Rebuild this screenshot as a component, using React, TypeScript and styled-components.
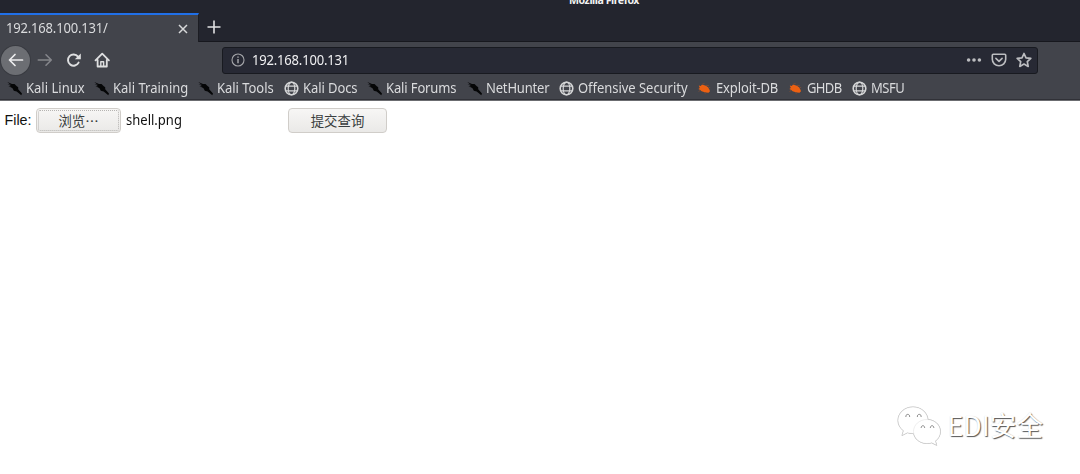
import React from "react";
import styled, { createGlobalStyle } from "styled-components";

const Global = createGlobalStyle`
  * { box-sizing: border-box; }
  body { margin: 0; background: #fff; overflow: hidden; }
`;

const Window = styled.div`
  position: relative;
  width: 1080px;
  height: 474px;
  background: #fff;
  font-family: "Noto Sans", "Noto Sans CJK SC", sans-serif;
  font-size: 14px;
  display: flex;
  flex-direction: column;
`;

const TitleBar = styled.header`
  height: 13px;
  background: #23252e;
  overflow: hidden;
  display: flex;
  padding-left: 569px;
`;

const Title = styled.span<{ $spacing: number }>`
  color: #f2f2f2;
  font-weight: 700;
  font-size: 10.6px;
  line-height: 14px;
  height: 14px;
  margin-top: -7px;
  letter-spacing: ${(p) => p.$spacing}px;
  white-space: nowrap;
`;

const TabStrip = styled.div`
  height: 29px;
  background: #23252e;
  display: flex;
  box-shadow: inset 0 -1px 0 #17181e;
`;

const Tab = styled.div`
  width: 199px;
  height: 29px;
  background: #42444b;
  border-top: 2px solid #2070e8;
  border-right: 1px solid #1c1d23;
  display: flex;
  align-items: center;
  justify-content: space-between;
  padding: 0 10px 2px 5.5px;
  svg { margin-top: 2px; }
`;

const NewTab = styled.div`
  display: flex;
  padding: 7px 0 0 8px;
`;

const Label = styled.span<{ $spacing?: number; $color?: string }>`
  color: ${(p) => p.$color ?? "#dadbdd"};
  letter-spacing: ${(p) => p.$spacing ?? 0}px;
  line-height: 18px;
  white-space: nowrap;
  display: block;
  transform: scaleX(0.93);
  transform-origin: left;
`;

const NavBar = styled.nav`
  height: 35px;
  background: #42444b;
  display: flex;
  align-items: center;
  padding: 1px 0 0 1px;
`;

const NavButtons = styled.div`
  width: 221px;
  display: flex;
  align-items: center;
`;

const BackButton = styled.div`
  width: 29px;
  height: 29px;
  border-radius: 50%;
  background: #6c6e73;
  box-shadow: 0 0 0 1px #393b41;
  display: flex;
  align-items: center;
  justify-content: center;
  margin-right: 6px;
`;

const NavIcon = styled.div`
  width: 29px;
  display: flex;
  svg { display: block; }
`;

const UrlBar = styled.div`
  width: 816px;
  height: 27px;
  background: #272934;
  border: 1px solid #181a20;
  border-radius: 3px;
  display: flex;
  align-items: center;
  padding: 0 5px 0 8px;
`;

const UrlText = styled.div`
  flex: 1;
  padding-left: 7px;
  display: flex;
`;

const UrlActions = styled.div`
  display: flex;
  align-items: center;
  gap: 9px;
`;

const Bookmarks = styled.div`
  height: 24px;
  background: #42444b;
  border-bottom: 1px solid #6b6c70;
  box-shadow: inset 0 -1px 0 #303137;
  display: flex;
  align-items: center;
  padding: 0 0 1px 6.5px;
`;

const Bookmark = styled.div<{ $width: number }>`
  width: ${(p) => p.$width}px;
  display: flex;
  align-items: center;
  flex: none;
`;

const BookmarkIcon = styled.span`
  width: 19px;
  flex: none;
  display: flex;
`;

const Form = styled.main`
  display: flex;
  align-items: center;
  height: 39px;
  padding-left: 4.500px;
`;

const FileLabel = styled.span`
  width: 31.500px;
  font-family: "Liberation Sans", Arial, sans-serif;
  font-size: 14.300px;
  line-height: 18px;
  padding-bottom: 1px;
  color: #111;
  white-space: nowrap;
`;

const Button = styled.button<{ $width: number; $focused?: boolean }>`
  width: ${(p) => p.$width}px;
  height: 25px;
  padding: 1px;
  border: 1px solid #d0cdc9;
  border-radius: 4px;
  background: linear-gradient(#f7f6f5, #eae9e7);
  font-family: "Noto Sans CJK SC", sans-serif;
  font-size: 13.400px;
  line-height: 18px;
  color: #3a3e40;
  display: flex;
  align-items: stretch;
  white-space: nowrap;
  & > span {
    flex: 1;
    display: flex;
    align-items: center;
    justify-content: center;
    padding-bottom: 1px;
    border: 1px dotted ${(p) => (p.$focused ? "#b5b3b1" : "transparent")};
    border-radius: 2px;
  }
`;

const FileName = styled.div`
  width: 167px;
  padding: 0 0 1px 5px;
  display: flex;
`;

const Watermark = styled.div`
  position: absolute;
  left: 896px;
  top: 402px;
  display: flex;
  align-items: center;
  svg { overflow: visible; filter: drop-shadow(0.700px 0.900px 0.500px #777); }
`;

const WatermarkText = styled.span`
  font-family: "Noto Sans CJK SC", sans-serif;
  font-size: 26.800px;
  line-height: 46px;
  color: #fff;
  padding-left: 4.500px;
  white-space: nowrap;
  text-shadow: 1px 1px 1px #555, 0 0 1px #ddd;
`;

const Dragon = () => (
  <svg width="15" height="15" viewBox="0 0 15 15">
    <path d="M.3 1 5 3.100 7.500 3 9.500 5 11.200 6.300 11.200 8.300 15 12.400 14.300 14.200 9.700 10.400 6.800 9.700 5.500 7.300 1.500 5 4.200 5.200.6 2.900 3.900 3.900Z" fill="#050607" />
  </svg>
);

const Globe = () => (
  <svg width="15" height="15" viewBox="0 0 15 15" fill="none" stroke="#d5d6d7">
    <circle cx="7.500" cy="7.500" r="6.300" strokeWidth="1.600" />
    <ellipse cx="7.500" cy="7.500" rx="3.300" ry="6.300" strokeWidth="1.200" />
    <path d="M1.700 5.200h11.600M1.700 9.800h11.600" strokeWidth="1.200" />
  </svg>
);

const Bug = () => (
  <svg width="15" height="15" viewBox="0 0 15 15">
    <path d="M1.800 4.500 3.900 5 4.700 3.800 6.500 4 8.800 4.700 11 6.300 12.400 8.500 13 10.200 11.500 11.700 9.200 11.500 7 11.100 4.600 10.300 3.200 8.900 1.400 7.900 2.800 6.900Z" fill="#ec6012" />
    <path d="M5 3.400 7.500 2.400M9 4.300l3 .5M3 9.500 1.500 10.500M7 11.300l1.600 1.400M11.400 6.300l1.800.4" stroke="#93502f" strokeWidth=".6" fill="none" />
  </svg>
);

const icons = { dragon: Dragon, globe: Globe, bug: Bug };

type Item = { name: string; icon: keyof typeof icons; width: number; spacing: number };

const bookmarks: Item[] = [
  { name: "Kali Linux", icon: "dragon", width: 87.5, spacing: 0 },
  { name: "Kali Training", icon: "dragon", width: 104, spacing: 0 },
  { name: "Kali Tools", icon: "dragon", width: 85.5, spacing: -0.05 },
  { name: "Kali Docs", icon: "globe", width: 83.5, spacing: -0.1 },
  { name: "Kali Forums", icon: "dragon", width: 99.5, spacing: -0.15 },
  { name: "NetHunter", icon: "dragon", width: 92.5, spacing: -0.2 },
  { name: "Offensive Security", icon: "globe", width: 138, spacing: -0.05 },
  { name: "Exploit-DB", icon: "bug", width: 91, spacing: -0.15 },
  { name: "GHDB", icon: "bug", width: 64, spacing: -0.7 },
  { name: "MSFU", icon: "globe", width: 56, spacing: -0.5 },
];

export default function App() {
  return (
    <Window>
      <Global />
      <TitleBar>
        <Title $spacing={-0.45}>Mozilla Firefox</Title>
      </TitleBar>
      <TabStrip>
        <Tab>
          <Label $spacing={-0.2}>192.168.100.131/</Label>
          <svg width="10" height="10" viewBox="0 0 10 10" stroke="#d8d9da" strokeWidth="1.5">
            <path d="M1 1l8 8M9 1 1 9" />
          </svg>
        </Tab>
        <NewTab>
          <svg width="14" height="14" viewBox="0 0 14 14" stroke="#e2e2e3" strokeWidth="1.6">
            <path d="M7 .5v13M.5 7h13" />
          </svg>
        </NewTab>
      </TabStrip>
      <NavBar>
        <NavButtons>
          <BackButton>
            <svg width="16" height="16" viewBox="0 0 16 16" fill="none" stroke="#ececed" strokeWidth="1.7" strokeLinecap="round" strokeLinejoin="round">
              <path d="M14.500 8H1.600M7 2.500 1.500 8 7 13.500" />
            </svg>
          </BackButton>
          <NavIcon>
            <svg width="17" height="16" viewBox="0 0 17 16" fill="none" stroke="#85868b" strokeWidth="1.6" strokeLinecap="round" strokeLinejoin="round">
              <path d="M2.300 8h13M10 2.800 15.300 8 10 13.200" />
            </svg>
          </NavIcon>
          <NavIcon>
            <svg width="17" height="16" viewBox="0 0 17 16" fill="none">
              <path d="M13 4.600A5.600 5.600 0 1 0 13.600 10.600" stroke="#dedfe0" strokeWidth="1.9" strokeLinecap="round" />
              <path d="M15.800 1.400v5.800H9.800Z" fill="#dedfe0" />
            </svg>
          </NavIcon>
          <NavIcon>
            <svg width="17" height="16" viewBox="0 0 17 16" fill="none" stroke="#dedfe0" strokeWidth="1.8" strokeLinecap="round" strokeLinejoin="round">
              <path d="M1.500 8.300 8.200 1.600l6.700 6.700M3.600 8v6.500h9.200V8" />
              <path d="M6.800 14v-4.200h2.800V14" strokeWidth="1.4" />
            </svg>
          </NavIcon>
        </NavButtons>
        <UrlBar>
          <svg width="14" height="14" viewBox="0 0 14 14" fill="none" stroke="#a4a5a9">
            <circle cx="7" cy="7" r="6" strokeWidth="1.1" />
            <path d="M7 6v4.300M7 3.400v1.400" strokeWidth="1.5" />
          </svg>
          <UrlText>
            <Label $spacing={-0.2} $color="#f0f0f2">192.168.100.131</Label>
          </UrlText>
          <UrlActions>
            <svg width="16" height="16" viewBox="0 0 16 16" fill="#bcbdc0">
              <circle cx="2.600" cy="8" r="1.800" />
              <circle cx="8" cy="8" r="1.800" />
              <circle cx="13.400" cy="8" r="1.800" />
            </svg>
            <svg width="16" height="16" viewBox="0 0 16 16" fill="none" stroke="#bcbdc0" strokeWidth="1.600" strokeLinecap="round" strokeLinejoin="round">
              <path d="M2.300 2.200h11.400q1 0 1 1V7.300a6.700 6.500 0 0 1-13.400 0V3.200q0-1 1-1Z" />
              <path d="M4.900 6.400 8 9.300l3.100-2.900" />
            </svg>
            <svg width="16" height="16" viewBox="0 0 16 16" fill="none" stroke="#bcbdc0" strokeWidth="1.700" strokeLinejoin="round">
              <path d="M8 1.500 10 5.800l4.800.6-3.500 3.300.9 4.700L8 12.100l-4.200 2.300.9-4.700L1.200 6.400 6 5.800Z" />
            </svg>
          </UrlActions>
        </UrlBar>
      </NavBar>
      <Bookmarks>
        {bookmarks.map((b) => {
          const Icon = icons[b.icon];
          return (
            <Bookmark key={b.name} $width={b.width}>
              <BookmarkIcon><Icon /></BookmarkIcon>
              <Label $spacing={b.spacing}>{b.name}</Label>
            </Bookmark>
          );
        })}
      </Bookmarks>
      <Form>
        <FileLabel>File:</FileLabel>
        <Button $width={85} $focused><span>浏览…</span></Button>
        <FileName>
          <Label $spacing={0} $color="#111">shell.png</Label>
        </FileName>
        <Button $width={99}><span>提交查询</span></Button>
      </Form>
      <Watermark>
        <svg width="47" height="42" viewBox="0 0 47 42" fill="#fff" stroke="#ddd" strokeWidth=".5">
          <path d="M17 3C8.500 3 2 9 2 16.500c0 4.200 2.200 7.800 5.500 10.200L6 31.500l5.400-2.800c1.800.5 3.600.8 5.600.8 8.500 0 15-5.800 15-13S25.500 3 17 3Z" />
          <path d="M31 15.500c-7.500 0-13.500 5.200-13.500 12S23.500 39.500 31 39.500c1.700 0 3.300-.2 4.700-.7l5 2.500-1.300-4.300c3-2.200 5-5.500 5-9.500 0-6.800-6-12-13.400-12Z" />
          <g fill="none" stroke="#888" strokeWidth="1">
            <path d="M10 13a1.900 1.900 0 1 1 3.500 0M21.500 13a1.900 1.900 0 1 1 3.500 0M25.300 24a1.700 1.700 0 1 1 3.200 0M34.500 24a1.700 1.700 0 1 1 3.200 0" />
          </g>
        </svg>
        <WatermarkText>EDI安全</WatermarkText>
      </Watermark>
    </Window>
  );
}
